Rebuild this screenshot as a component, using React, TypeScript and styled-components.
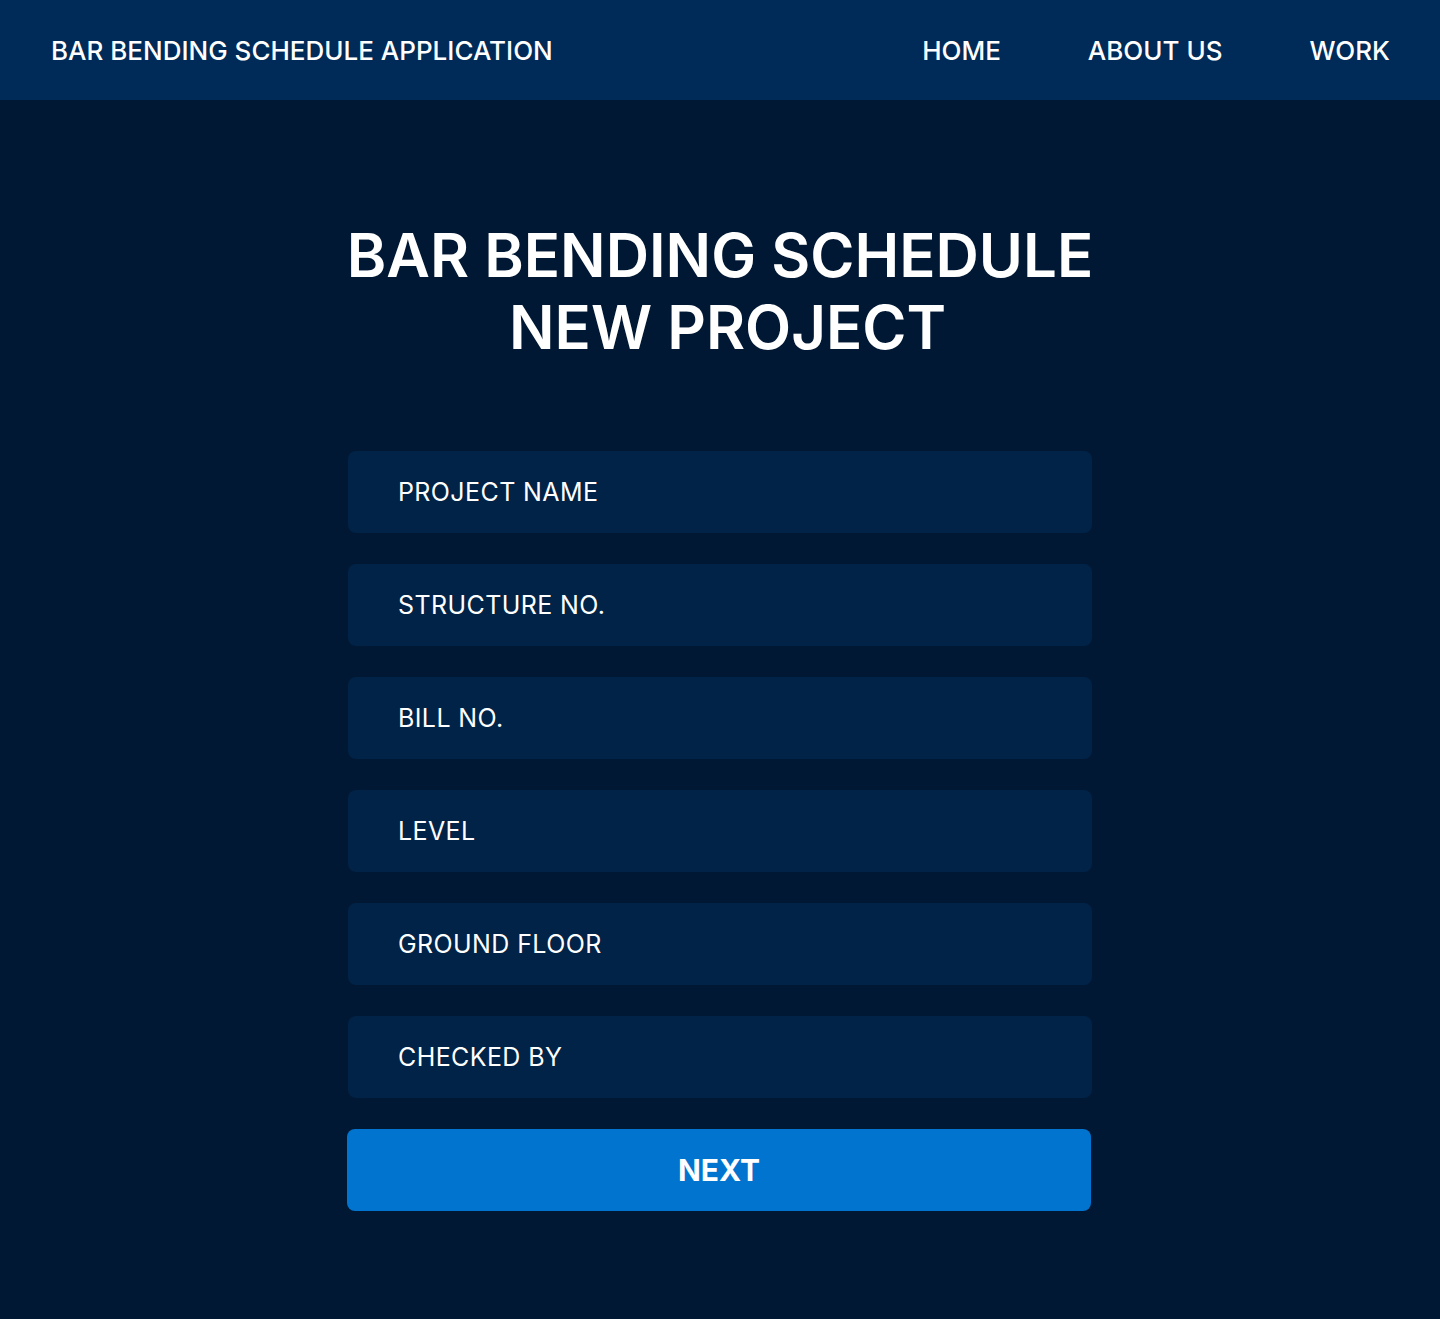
import React from "react";
import styled, { createGlobalStyle } from "styled-components";

const fields = [
  "PROJECT NAME",
  "STRUCTURE NO.",
  "BILL NO.",
  "LEVEL",
  "GROUND FLOOR",
  "CHECKED BY",
];

const GlobalStyle = createGlobalStyle`
  html, body {
    margin: 0;
    padding: 0;
    background: #001833;
  }
  body {
    font-family: Inter, "Noto Sans", sans-serif;
    color: #ffffff;
  }
  * {
    box-sizing: border-box;
  }
`;

const App = () => {
  return (
    <Page>
      <GlobalStyle />
      <Header>
        <Brand>BAR BENDING SCHEDULE APPLICATION</Brand>
        <Nav>
          <NavLink>HOME</NavLink>
          <NavLink>ABOUT US</NavLink>
          <NavLink>WORK</NavLink>
        </Nav>
      </Header>
      <Main>
        <Title>
          BAR BENDING SCHEDULE
          <br />
          {"\u00a0"}NEW PROJECT
        </Title>
        <Form onSubmit={(e) => e.preventDefault()}>
          {fields.map((item) => (
            <Field key={item} placeholder={item} />
          ))}
          <NextButton type="submit">NEXT</NextButton>
        </Form>
      </Main>
    </Page>
  );
};

export default App;

const Page = styled.div`
  min-height: 1319px;
  background: #001833;
`;

const Header = styled.header`
  display: flex;
  align-items: center;
  justify-content: space-between;
  height: 100px;
  padding: 0 50px 0 51px;
  background: #002a58;
`;

const Brand = styled.div`
  font-size: 26px;
  font-weight: 500;
  color: #ffffff;
`;

const Nav = styled.nav`
  display: flex;
  align-items: center;
  gap: 87px;
`;

const NavLink = styled.a`
  font-size: 26px;
  font-weight: 500;
  color: #ffffff;
  cursor: pointer;
`;

const Main = styled.main`
  display: flex;
  flex-direction: column;
  align-items: center;
  padding-top: 119px;
`;

const Title = styled.h1`
  margin: 0;
  font-size: 60px;
  font-weight: 600;
  line-height: 72px;
  text-align: center;
  color: #ffffff;
`;

const Form = styled.form`
  display: flex;
  flex-direction: column;
  gap: 31px;
  width: 744px;
  margin-top: 88px;
`;

const Field = styled.input`
  height: 82px;
  padding: 0 50px;
  border: none;
  border-radius: 8px;
  background: #002347;
  font-family: Inter, "Noto Sans", sans-serif;
  font-size: 25px;
  letter-spacing: 0.4px;
  color: #ffffff;
  outline: none;

  &::placeholder {
    color: #ffffff;
    opacity: 1;
  }
`;

const NextButton = styled.button`
  height: 82px;
  margin: 0 1px 0 -1px;
  border: none;
  border-radius: 8px;
  background: #0074cf;
  font-family: Inter, "Noto Sans", sans-serif;
  font-size: 30px;
  font-weight: 700;
  color: #ffffff;
  cursor: pointer;
`;
